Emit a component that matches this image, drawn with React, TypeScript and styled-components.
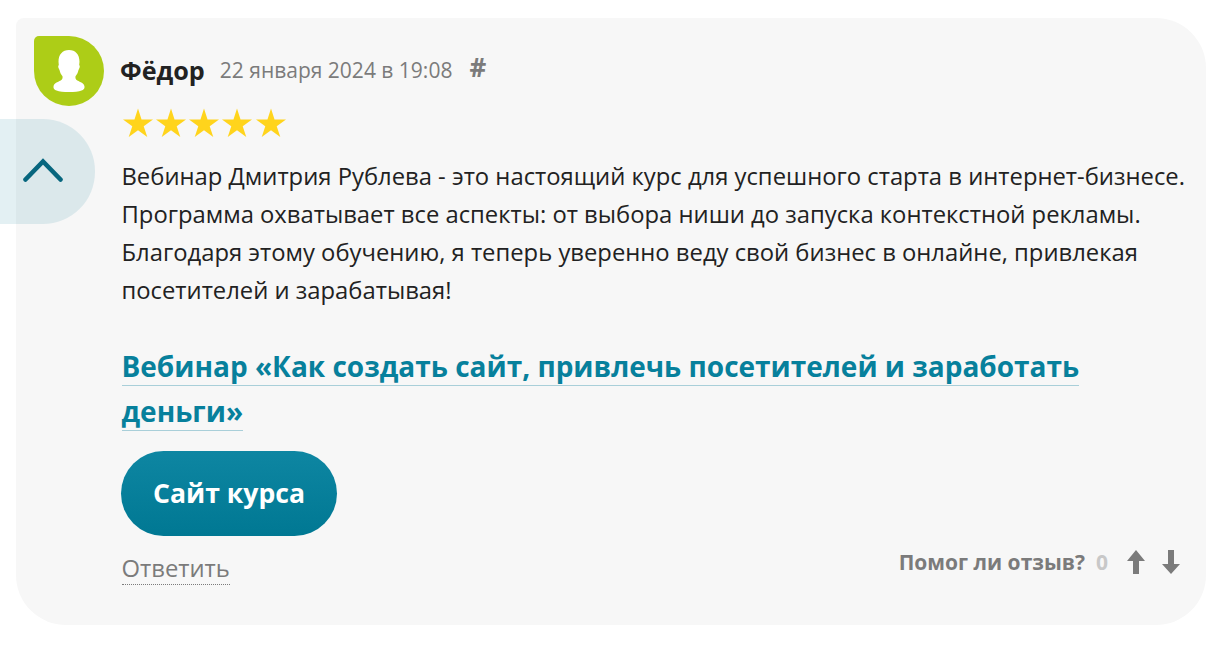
import React from 'react';
import styled, { createGlobalStyle } from 'styled-components';

const GlobalStyle = createGlobalStyle`
  html, body {
    margin: 0;
    padding: 0;
    background: #fff;
    font-family: "Open Sans", "Liberation Sans", sans-serif;
  }
`;

const Page = styled.div`
  position: relative;
  height: 646px;
  padding: 18px 12px 0 16px;
  box-sizing: border-box;
  overflow: hidden;
`;

const Card = styled.article`
  display: flex;
  gap: 16px;
  height: 607px;
  box-sizing: border-box;
  padding: 18px 20px 0 18px;
  background: #f7f7f7;
  border-radius: 8px 50px 50px 50px;
`;

const Avatar = styled.div`
  flex: none;
  width: 70px;
  height: 70px;
  background: #adcd17;
  border-radius: 5px 35px 35px 35px;
  overflow: hidden;
`;

const Body = styled.div`
  flex: 1;
  min-width: 0;
  display: flex;
  flex-direction: column;
  margin-left: 1.5px;
`;

const Header = styled.header`
  display: flex;
  align-items: flex-start;
  height: 70px;
  margin-left: -1.5px;
`;

const Name = styled.span`
  font-size: 25.2px;
  line-height: 68px;
  font-weight: 700;
  color: #222;
`;

const DateText = styled.span`
  margin-left: 15px;
  font-size: 21px;
  line-height: 68px;
  color: #7b7b7b;
`;

const Hash = styled.span`
  margin-left: 17px;
  font-size: 26px;
  line-height: 62px;
  font-weight: 700;
  color: #7b7b7b;
`;

const Stars = styled.div`
  display: flex;
  gap: 3.25px;
  height: 36px;
  align-items: center;
  margin: -1px 0 0 1.2px;
`;

const ReviewText = styled.p`
  margin: 16px 0 0;
  font-size: 23.8px;
  line-height: 38px;
  color: #222;
`;

const CourseTitle = styled.h3`
  margin: 35px 0 0;
  font-size: 28px;
  font-weight: 700;
  line-height: 45px;
  color: #07809c;
`;

const CourseLink = styled.a`
  color: inherit;
  text-decoration: none;
  border-bottom: 1px solid #a9cfd9;
`;

const CourseButton = styled.a`
  display: flex;
  align-items: center;
  justify-content: center;
  width: 216px;
  height: 85px;
  box-sizing: border-box;
  padding-bottom: 2px;
  margin: 17px 0 0 -0.5px;
  border-radius: 43px;
  background: linear-gradient(180deg, #0e86a2 0%, #007893 100%);
  color: #fff;
  font-size: 26.6px;
  font-weight: 700;
`;

const Footer = styled.footer`
  display: flex;
  justify-content: space-between;
  align-items: flex-start;
  margin-top: 13px;
  padding-right: 6px;
`;

const Reply = styled.a`
  margin-top: 3px;
  font-size: 23.8px;
  line-height: 32px;
  color: #7b7b7b;
  border-bottom: 1px dotted #7b7b7b;
`;

const Helpful = styled.div`
  display: flex;
  align-items: center;
  height: 26px;
  font-size: 21px;
  font-weight: 700;
  color: #7b7b7b;
`;

const HelpCount = styled.span`
  margin-left: 11px;
  color: #c8c8c8;
`;

const VoteIcon = styled.svg<{ $gap: number }>`
  display: block;
  margin-left: ${p => p.$gap}px;
`;

const ScrollUp = styled.button`
  position: absolute;
  left: 0;
  top: 119px;
  width: 95px;
  height: 105px;
  padding: 0 10px 3px 0;
  border: 0;
  display: flex;
  align-items: center;
  justify-content: center;
  background: rgba(0, 120, 147, 0.11);
  border-radius: 0 52px 52px 0;
`;

const StarIcon = () => (
  <svg width="30" height="30" viewBox="0 0 30 30">
    <polygon
      fill="#ffd41c"
      points="15,.5 18.54,11.4 30,11.4 20.73,18.13 24.27,29.03 15,22.29 5.73,29.03 9.27,18.13 0,11.4 11.46,11.4"
    />
  </svg>
);

const App: React.FC = () => (
  <React.Fragment>
    <GlobalStyle />
    <Page>
      <Card>
        <Avatar>
          <svg width="70" height="70" viewBox="0 0 70 70">
            <path
              fill="#fff"
              transform="translate(0 -1.7) scale(1 1.12)"
              d="M35 14c6.500 0 10.500 4 10.500 10.500l-.3 3c.8.600.8 2-.2 3.500-.5.800-.7 1.500-1 2.500-.6 1.800-1.500 3-2.500 4-.3 1.800.2 3 1.800 3.800 3.200 1.400 6.700 2.500 7.200 5.200.3 1.800-1 3-3 3.700-2.500 1-7.500 1.300-12.500 1.300s-10-.3-12.500-1.300c-2-.7-3.300-1.900-3-3.700.5-2.700 4-3.800 7.200-5.200 1.600-.8 2.100-2 1.800-3.800-1-1-1.900-2.200-2.500-4-.3-1-.5-1.700-1-2.500-1-1.500-1-2.900-.2-3.500l-.3-3C24.500 18 28.500 14 35 14z"
            />
          </svg>
        </Avatar>
        <Body>
          <Header>
            <Name>Фёдор</Name>
            <DateText>22 января 2024 в 19:08</DateText>
            <Hash>#</Hash>
          </Header>
          <Stars>
            {[0, 1, 2, 3, 4].map(i => (
              <StarIcon key={i} />
            ))}
          </Stars>
          <ReviewText>
            Вебинар Дмитрия Рублева - это настоящий курс для успешного старта в интернет-бизнесе.
            Программа охватывает все аспекты: от выбора ниши до запуска контекстной рекламы.
            Благодаря этому обучению, я теперь уверенно веду свой бизнес в онлайне, привлекая
            посетителей и зарабатывая!
          </ReviewText>
          <CourseTitle>
            <CourseLink>Вебинар «Как создать сайт, привлечь посетителей и заработать деньги»</CourseLink>
          </CourseTitle>
          <CourseButton>Сайт курса</CourseButton>
          <Footer>
            <Reply>Ответить</Reply>
            <Helpful>
              Помог ли отзыв?
              <HelpCount>0</HelpCount>
              <VoteIcon $gap={19} width="18" height="26" viewBox="0 0 18 26">
                <path fill="#7b7b7b" d="M9 1l9 11h-6v13H6V12H0z" />
              </VoteIcon>
              <VoteIcon $gap={17} width="18" height="26" viewBox="0 0 18 26">
                <path fill="#7b7b7b" d="M9 25L0 15h6V1h6v14h6z" />
              </VoteIcon>
            </Helpful>
          </Footer>
        </Body>
      </Card>
      <ScrollUp aria-label="Наверх">
        <svg width="40" height="26" viewBox="0 0 40 26">
          <path
            fill="none"
            stroke="#07667e"
            strokeWidth="4.6"
            strokeLinecap="round"
            strokeLinejoin="miter"
            d="M2.500 22.500L20 4.500l17.500 18"
          />
        </svg>
      </ScrollUp>
    </Page>
  </React.Fragment>
);

export default App;
